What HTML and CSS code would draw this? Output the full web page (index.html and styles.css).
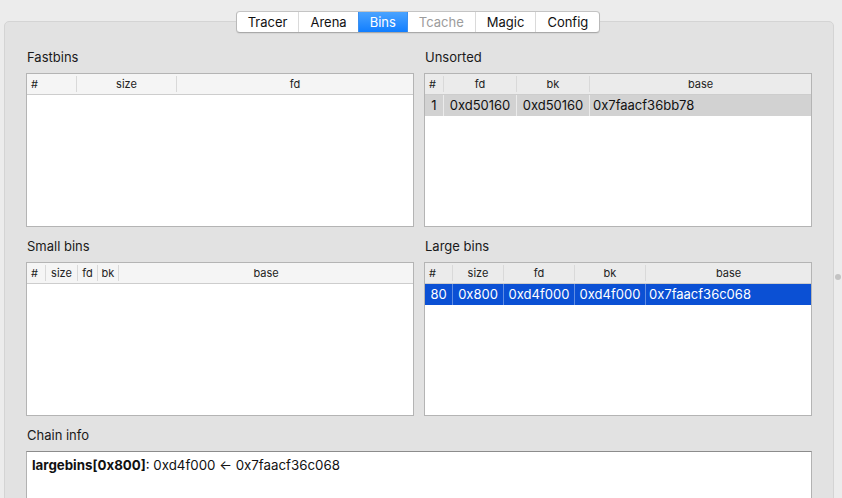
FILE: index.html
```html
<!DOCTYPE html>
<html>
<head>
<meta charset="utf-8">
<link rel="stylesheet" href="styles.css">
</head>
<body>
<div class="window">
  <div class="tabs">
    <div class="tab">Tracer</div>
    <div class="tab">Arena</div>
    <div class="tab active">Bins</div>
    <div class="tab disabled">Tcache</div>
    <div class="tab">Magic</div>
    <div class="tab">Config</div>
  </div>
  <div class="panel">
    <div class="grid">
      <section class="section">
        <div class="label">Fastbins</div>
        <div class="table fast">
          <div class="head">
            <div class="hc left">#</div>
            <div class="hc">size</div>
            <div class="hc">fd</div>
          </div>
        </div>
      </section>
      <section class="section">
        <div class="label">Unsorted</div>
        <div class="table unsorted inactive">
          <div class="head">
            <div class="hc left">#</div>
            <div class="hc">fd</div>
            <div class="hc">bk</div>
            <div class="hc">base</div>
          </div>
          <div class="row sel-gray">
            <div class="c">1</div>
            <div class="c">0xd50160</div>
            <div class="c">0xd50160</div>
            <div class="c base">0x7faacf36bb78</div>
          </div>
        </div>
      </section>
      <section class="section">
        <div class="label">Small bins</div>
        <div class="table small">
          <div class="head">
            <div class="hc left">#</div>
            <div class="hc">size</div>
            <div class="hc">fd</div>
            <div class="hc">bk</div>
            <div class="hc">base</div>
          </div>
        </div>
      </section>
      <section class="section">
        <div class="label">Large bins</div>
        <div class="table large inactive">
          <div class="head">
            <div class="hc left">#</div>
            <div class="hc">size</div>
            <div class="hc">fd</div>
            <div class="hc">bk</div>
            <div class="hc">base</div>
          </div>
          <div class="row sel-blue">
            <div class="c">80</div>
            <div class="c">0x800</div>
            <div class="c">0xd4f000</div>
            <div class="c">0xd4f000</div>
            <div class="c base">0x7faacf36c068</div>
          </div>
        </div>
      </section>
      <section class="section wide">
        <div class="label">Chain info</div>
        <div class="textbox"><b>largebins[0x800]</b>: 0xd4f000 ← 0x7faacf36c068</div>
      </section>
    </div>
  </div>
  <div class="dot"></div>
</div>
</body>
</html>
```
FILE: styles.css
```css
html, body {
  margin: 0;
  padding: 0;
  height: 498px;
  overflow: hidden;
}
body {
  background: #ececec;
  font-family: Inter, "Liberation Sans", Arial, sans-serif;
  font-size: 13px;
  color: #1b1b1b;
}
.window {
  position: relative;
  padding: 11px 8px 0 4px;
}
.tabs {
  position: relative;
  z-index: 1;
  display: flex;
  width: max-content;
  margin: 0 auto;
  height: 22px;
  border: 1px solid #b9b9b9;
  border-top-color: #c4c4c4;
  border-bottom-color: #a9a9a9;
  border-radius: 4px;
  background: #fff;
  box-shadow: 0 1px 1px rgba(0,0,0,0.06);
  box-sizing: border-box;
  overflow: hidden;
  transform: translateX(-1px);
}
.tab {
  padding: 0 11px;
  line-height: 20px;
  color: #111;
  border-left: 1px solid #dadada;
}
.tab:first-child { border-left: none; }
.tab.active {
  background: linear-gradient(#4aa3ff, #117eff);
  color: #fff;
  border-left-color: #3a8ff0;
}
.tab.active + .tab { border-left-color: #3a8ff0; }
.tab.disabled { color: #9c9c9c; }
.panel {
  margin-top: -12px;
  background: #e2e2e2;
  border: 1px solid #d4d4d4;
  border-radius: 5px;
  padding: 27px 21px 0 21px;
  height: 520px;
}
.grid {
  display: grid;
  grid-template-columns: 1fr 1fr;
  column-gap: 10px;
  row-gap: 11px;
}
.section.wide { grid-column: 1 / span 2; }
.label {
  line-height: 16px;
  height: 16px;
  margin-bottom: 8px;
  padding-left: 1px;
  color: #1a1a1a;
}
.table {
  height: 154px;
  box-sizing: border-box;
  border: 1px solid #b4b4b4;
  background: #fff;
}
.head, .row { display: grid; }
.fast .head, .fast .row { grid-template-columns: 49px 100px 1fr; }
.unsorted .head, .unsorted .row { grid-template-columns: 18px 73px 73px 1fr; }
.small .head, .small .row { grid-template-columns: 18px 32px 20px 21px 1fr; }
.large .head, .large .row { grid-template-columns: 27px 51px 71px 71px 1fr; }
.head {
  background: #f5f5f5;
  border-bottom: 1px solid #cdcdcd;
  padding: 2px 0;
}
.inactive .head { background: #ebebeb; }
.hc {
  font-size: 11px;
  line-height: 16px;
  text-align: center;
  border-left: 1px solid #d9d9d9;
  color: #222;
  white-space: nowrap;
  overflow: hidden;
}
.hc:first-child { border-left: none; }
.hc.left { text-align: left; padding-left: 4px; }
.row { height: 21px; }
.c {
  line-height: 21px;
  text-align: center;
  white-space: nowrap;
  overflow: hidden;
  border-left: 1px solid rgba(255,255,255,0.55);
}
.c:first-child { border-left: none; }
.c.base { text-align: left; padding-left: 3px; }
.sel-gray { background: #d2d2d2; color: #111; }
.sel-blue { background: #0b50d4; color: #fff; }
.sel-blue .c { border-left-color: rgba(255,255,255,0.35); }
.textbox {
  height: 90px;
  background: #fff;
  border: 1px solid #b2b2b2;
  border-top-color: #8c8c8c;
  padding: 4px 5px;
  line-height: 18px;
  font-size: 13.3px;
  color: #111;
}
.textbox b { font-weight: 700; }
.dot {
  position: absolute;
  left: 835px;
  top: 274px;
  width: 6px;
  height: 6px;
  border-radius: 50%;
  background: #c3c3c3;
}
```
